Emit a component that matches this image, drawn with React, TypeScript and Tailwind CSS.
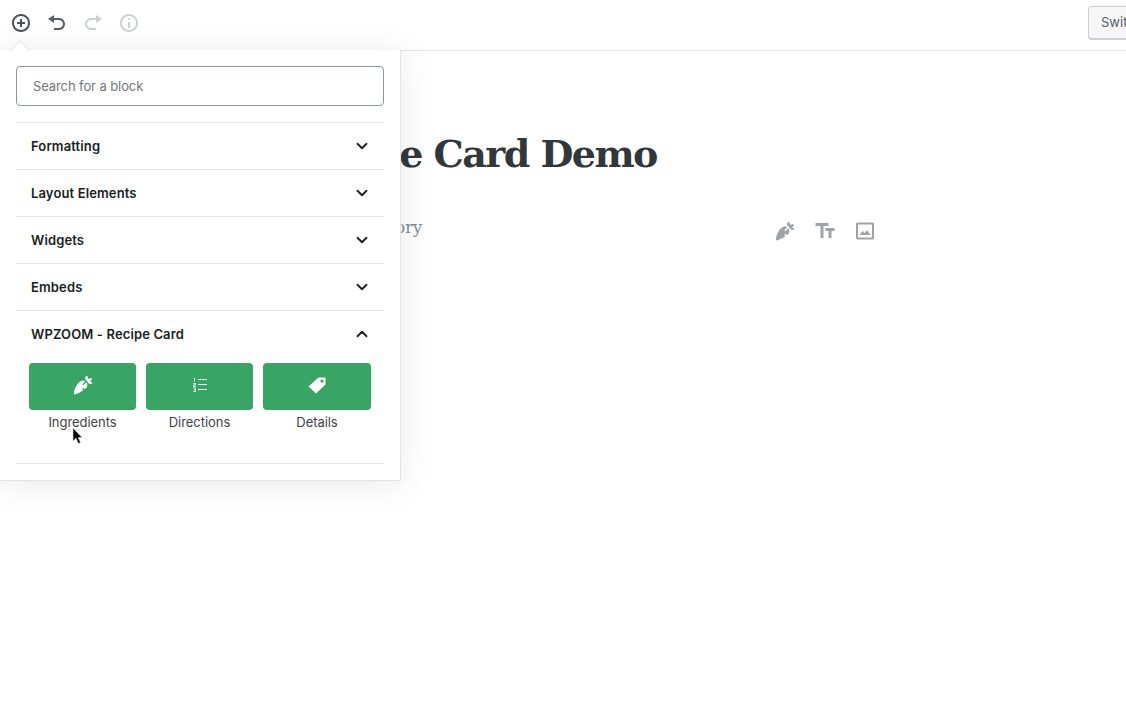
import { ChevronDown, ChevronUp } from "lucide-react";
import { MdTextFields } from "react-icons/md";

const categories = ["Formatting", "Layout Elements", "Widgets", "Embeds"];

function UndoIcon({ className }: { className: string }) {
  return (
    <svg viewBox="0 0 20 20" className={className} fill="currentColor">
      <path d="M12 5H7V2L1 6l6 4V7h5c2.2 0 4 1.8 4 4s-1.8 4-4 4H7v2h5c3.3 0 6-2.7 6-6s-2.7-6-6-6z" />
    </svg>
  );
}

function RedoIcon({ className }: { className: string }) {
  return (
    <svg viewBox="0 0 20 20" className={className} fill="currentColor">
      <path d="M8 5h5V2l6 4-6 4V7H8c-2.2 0-4 1.8-4 4s1.8 4 4 4h5v2H8c-3.3 0-6-2.7-6-6s2.7-6 6-6z" />
    </svg>
  );
}

function InsertIcon({ className }: { className: string }) {
  return (
    <svg viewBox="0 0 20 20" className={className} fill="currentColor">
      <path d="M10 1c-5 0-9 4-9 9s4 9 9 9 9-4 9-9-4-9-9-9zm0 16c-3.9 0-7-3.1-7-7s3.1-7 7-7 7 3.1 7 7-3.1 7-7 7zm1-11H9v3H6v2h3v3h2v-3h3V9h-3V6z" />
    </svg>
  );
}

function InfoIcon({ className }: { className: string }) {
  return (
    <svg viewBox="0 0 20 20" className={className} fill="currentColor">
      <path d="M9 15h2V9H9v6zm1-10c-.5 0-1 .5-1 1s.5 1 1 1 1-.5 1-1-.5-1-1-1zm0-4c-5 0-9 4-9 9s4 9 9 9 9-4 9-9-4-9-9-9zm0 16c-3.9 0-7-3.1-7-7s3.1-7 7-7 7 3.1 7 7-3.1 7-7 7z" />
    </svg>
  );
}

function CarrotIcon({ className }: { className: string }) {
  return (
    <svg viewBox="0 0 20 20" className={className} fill="currentColor">
      <path d="M1 19.5C0.5 15.5 3.5 8.5 7.5 6.2C9.2 5.2 11 5.3 12.3 6.3L9.4 9.2L10.4 10.2L13.3 7.3C14.6 8.8 14.8 10.8 13.6 12.4L11.7 14.3L10.2 12.8L9.2 13.8L10.4 15C7.5 17.5 3.5 19.3 1 19.5Z" />
      <path d="M12.3 4.6C11.9 3 12.3 1.6 13.5 0.5C14.7 1.4 15.3 2.6 15.1 4C16.3 3.1 17.7 3 19 3.6C18.8 5 18 6 16.8 6.4C18 6.6 19 7.4 19.5 8.5C18 9.4 15.8 9 14.8 7.2C14.2 6.2 13.4 5.3 12.3 4.6Z" />
    </svg>
  );
}

function TagIcon() {
  return (
    <svg viewBox="0 0 20 20" className="w-5 h-5 text-white" fill="currentColor">
      <path
        fillRule="evenodd"
        d="M11.5 2.5H18.5V9.5L9 18.5L1.5 11.5ZM15 4.5a1.6 1.6 0 1 0 .01 0Z"
      />
    </svg>
  );
}

function ListIcon() {
  return (
    <svg viewBox="0 0 16 16" className="w-4 h-4 text-white" fill="none" stroke="currentColor">
      <path d="M6 2.5H15M6 7.5H15M6 12.5H15" strokeWidth="1" />
      <path d="M2.5 0.8V4.5M1.5 6.5H3.5V8H1.5V9.5H3.5M1.5 11H3.5V14.5H1.5M1.8 12.7H3.5" strokeWidth="0.9" />
    </svg>
  );
}

function ImageIcon() {
  return (
    <svg viewBox="0 0 20 20" className="w-5 h-5" fill="currentColor">
      <path d="M2.5 1.5H17.5A1.5 1.5 0 0 1 19 3V17A1.5 1.5 0 0 1 17.5 18.5H2.5A1.5 1.5 0 0 1 1 17V3A1.5 1.5 0 0 1 2.5 1.5ZM3 3.5V16.5H17V3.5ZM4.5 14L7.5 10L9.5 12L12 9L15.5 14Z" fillRule="evenodd" />
    </svg>
  );
}

function Cursor() {
  return (
    <svg viewBox="0 0 12 18" className="absolute left-[72px] top-[427px] w-[12px] h-[18px]">
      <path d="M1 1V14L4 11L6.3 16.5L8.5 15.5L6.2 10.5H10Z" fill="#000" stroke="#d8d8d8" strokeWidth="0.6" />
    </svg>
  );
}

export default function App() {
  return (
    <div className="relative w-[1126px] h-[717px] overflow-hidden bg-white font-['Inter',sans-serif] text-[#32373c]">
      {/* Top toolbar */}
      <div className="flex items-center h-[51px] pl-[11px] pb-[5px] border-b border-[#e2e4e7]">
        <InsertIcon className="shrink-0 w-5 h-5 mr-4 text-[#4a5058]" />
        <UndoIcon className="shrink-0 w-5 h-5 mr-4 text-[#555d66]" />
        <RedoIcon className="shrink-0 w-5 h-5 mr-4 text-[#ccd0d4]" />
        <InfoIcon className="shrink-0 w-5 h-5 text-[#ccd0d4]" />
        <button
          type="button"
          className="ml-[949px] shrink-0 h-[33px] px-3 bg-[#f7f7f7] border border-[#ccd0d4] rounded-[3px] shadow-[0_1px_0_#ccd0d4] text-[13px] text-[#555d66] whitespace-nowrap text-left"
        >
          Switch to Draft
        </button>
      </div>

      {/* Post canvas behind the inserter */}
      <div className="flex flex-col w-[875px] pl-[287px] pt-[77px]">
        <h1 className="text-[38px] leading-[52px] font-bold text-[#32373c] font-['DejaVu_Serif',serif] tracking-[-1.55px] whitespace-nowrap">
          Recipe Card Demo
        </h1>
        <div className="flex items-center justify-between mt-[39px]">
          <span className="text-[16px] leading-[30px] text-[#7e8993] font-['DejaVu_Serif',serif] tracking-[0.2px] -mt-[6px]">
            Write your story
          </span>
          <div className="flex items-center gap-5 text-[#9ea3a8]">
            <CarrotIcon className="w-5 h-5" />
            <MdTextFields className="w-6 h-6 -mx-[2px]" />
            <ImageIcon />
          </div>
        </div>
      </div>

      {/* Block inserter popover */}
      <div className="absolute left-0 top-[50px] w-[401px] h-[431px] bg-white border-r border-b border-[#e2e4e7] shadow-[0_3px_30px_rgba(25,30,35,0.1)] px-4 pt-4">
        <div className="absolute left-[13px] -top-[7px] w-[14px] h-[14px] rotate-45 bg-white border-l border-t border-[#e2e4e7]" />
        <input
          type="text"
          placeholder="Search for a block"
          className="block w-full h-10 px-4 rounded border border-[#8d96a0] text-[13px] tracking-[-0.1px] placeholder:text-[#72777c] outline-none"
        />
        <div className="mt-4 border-t border-[#e2e4e7]">
          {categories.map((name) => (
            <div key={name} className="flex items-center justify-between h-[47px] pt-[1px] pl-[15px] pr-[13px] border-b border-[#e2e4e7]">
              <span className="text-[13px] font-semibold tracking-[0.13px] text-[#191e23]">{name}</span>
              <ChevronDown className="w-[18px] h-[18px] -mt-[2px] text-[#191e23]" strokeWidth={2.4} />
            </div>
          ))}
          <div className="border-b border-[#e2e4e7] h-[153px]">
            <div className="flex items-center justify-between h-[47px] pl-[15px] pr-[13px]">
              <span className="text-[13px] font-semibold tracking-[0.13px] text-[#191e23]">WPZOOM - Recipe Card</span>
              <ChevronUp className="w-[18px] h-[18px] -mt-[2px] text-[#191e23]" strokeWidth={2.4} />
            </div>
            <div className="grid grid-cols-[107px_107px_108px] gap-[10px] px-[13px] mt-[5px]">
              {[
                { label: "Ingredients", icon: <CarrotIcon className="w-5 h-5 text-white" /> },
                { label: "Directions", icon: <ListIcon /> },
                { label: "Details", icon: <TagIcon /> },
              ].map((item) => (
                <div key={item.label} className="flex flex-col items-center">
                  <div className="flex items-center justify-center pb-[3px] w-full h-[47px] rounded bg-[#38a565]">
                    {item.icon}
                  </div>
                  <span className="mt-[4px] text-[13px] leading-[16px] tracking-[-0.05px] text-[#3e444b] font-normal">
                    {item.label}
                  </span>
                </div>
              ))}
            </div>
          </div>
        </div>
      </div>

      <Cursor />
    </div>
  );
}
